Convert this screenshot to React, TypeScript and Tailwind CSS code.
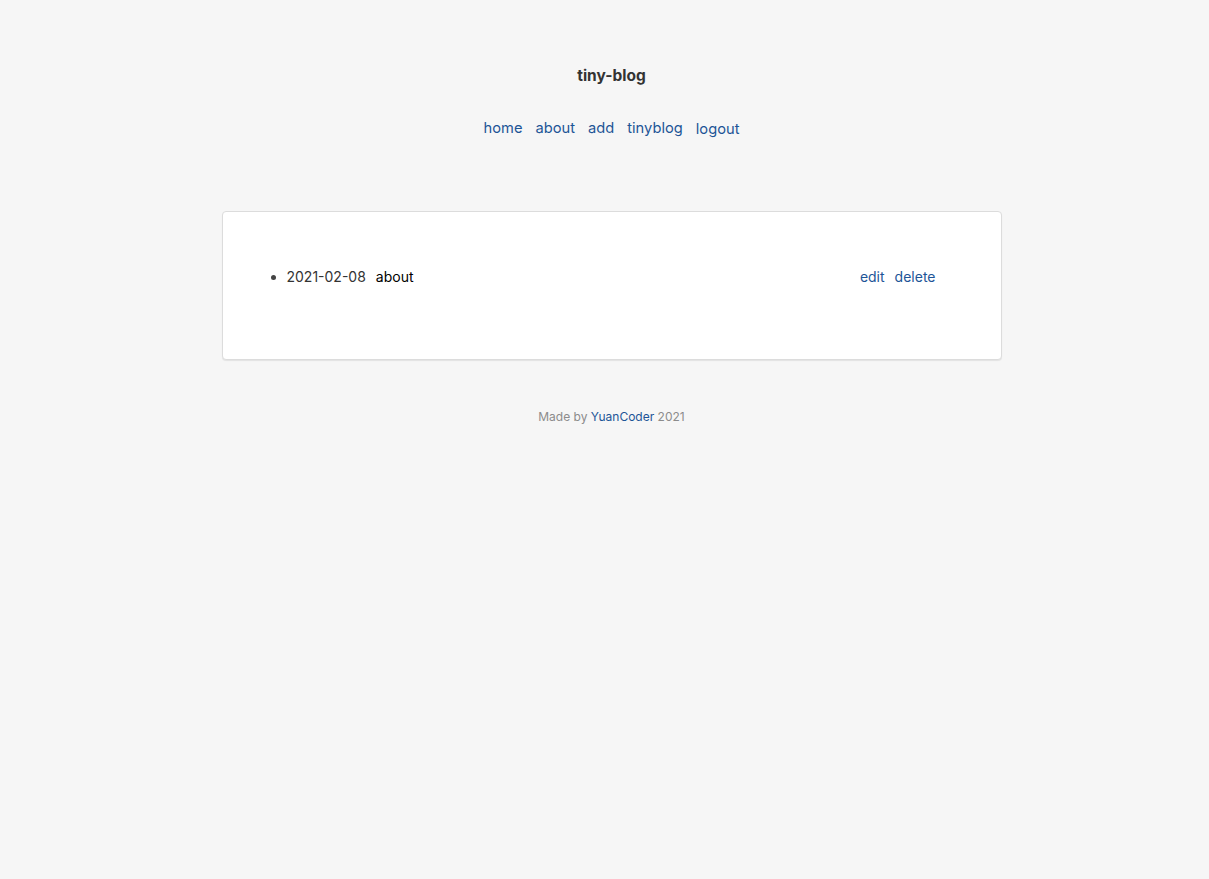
export default function App() {
  return (
    <div className="min-h-screen bg-[#f6f6f6] pl-[14px] font-['Inter',sans-serif] text-[#333]">
      <header className="pt-[65px] text-center">
        <h1 className="text-[15.5px] font-bold leading-[22px] text-[#333]">tiny-blog</h1>
        <nav className="mt-[30px] flex items-start justify-center gap-[13px] text-[14.7px] leading-[22px] text-[#1d5597]">
          <a href="#">home</a>
          <a href="#">about</a>
          <a href="#">add</a>
          <a href="#">tinyblog</a>
          <a href="#" className="mt-[1px]">logout</a>
        </nav>
      </header>

      <main className="mx-auto mt-[71px] w-[780px] rounded-[4px] border border-[#dcdcdc] bg-white px-[47px] pb-[71px] pt-[54px] shadow-[0_1px_1px_rgba(0,0,0,0.08)]">
        <ul className="list-disc pl-[17px] text-[14px] leading-[22px] marker:text-[#444]">
          <li>
            <div className="flex items-center justify-between">
              <span>
                <span className="text-[#333]">2021-02-08</span>
                <a href="#" className="ml-[10px] text-black">about</a>
              </span>
              <span className="mr-[18px] flex gap-[10px] text-[#1d5597]">
                <a href="#">edit</a>
                <a href="#">delete</a>
              </span>
            </div>
          </li>
        </ul>
      </main>

      <footer className="mt-[48px] text-center text-[12px] leading-[18px] text-[#8c8c8c]">
        Made by <a href="#" className="text-[#1d5597]">YuanCoder</a> 2021
      </footer>
    </div>
  );
}
